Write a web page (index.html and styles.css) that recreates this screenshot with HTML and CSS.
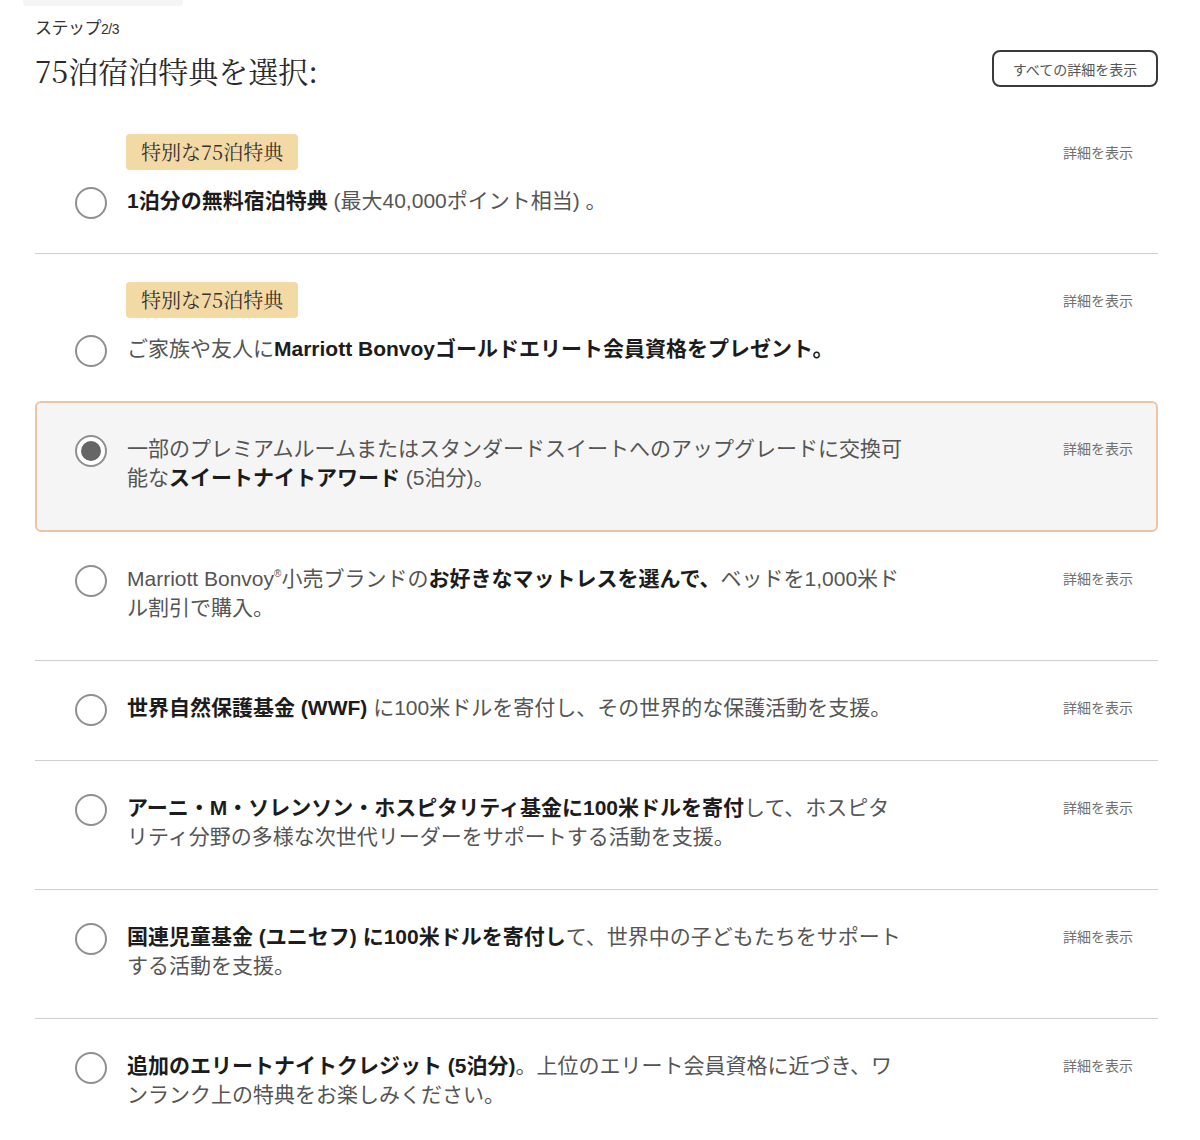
FILE: index.html
```html
<!DOCTYPE html>
<html lang="ja">
<head>
<meta charset="utf-8">
<title>75泊宿泊特典を選択</title>
<link rel="stylesheet" href="styles.css">
</head>
<body>
<div class="page">
  <div class="tab-shadow"></div>
  <header class="header">
    <p class="step">ステップ<span class="step-num">2/3</span></p>
    <div class="title-row">
      <h1 class="title">75泊宿泊特典を選択:</h1>
      <button class="all-details" type="button">すべての詳細を表示</button>
    </div>
  </header>

  <div class="options">
    <div class="option option--featured">
      <div class="option-body">
        <span class="badge">特別な75泊特典</span>
        <div class="choice">
          <span class="radio"></span>
          <p class="choice-text"><b>1泊分の無料宿泊特典</b> (最大40,000ポイント相当) 。</p>
        </div>
      </div>
      <a class="detail">詳細を表示</a>
    </div>

    <div class="option option--featured">
      <div class="option-body">
        <span class="badge">特別な75泊特典</span>
        <div class="choice">
          <span class="radio"></span>
          <p class="choice-text">ご家族や友人に<b>Marriott Bonvoyゴールドエリート会員資格をプレゼント。</b></p>
        </div>
      </div>
      <a class="detail">詳細を表示</a>
    </div>

    <div class="option option--selected">
      <div class="option-body">
        <div class="choice">
          <span class="radio radio--checked"></span>
          <p class="choice-text">一部のプレミアムルームまたはスタンダードスイートへのアップグレードに交換可<br>能な<b>スイートナイトアワード</b> (5泊分)。</p>
        </div>
      </div>
      <a class="detail">詳細を表示</a>
    </div>

    <div class="option">
      <div class="option-body">
        <div class="choice">
          <span class="radio"></span>
          <p class="choice-text">Marriott Bonvoy<sup>®</sup>小売ブランドの<b>お好きなマットレスを選んで、</b>ベッドを1,000米ド<br>ル割引で購入。</p>
        </div>
      </div>
      <a class="detail">詳細を表示</a>
    </div>

    <div class="option">
      <div class="option-body">
        <div class="choice">
          <span class="radio"></span>
          <p class="choice-text"><b>世界自然保護基金 (WWF)</b> に100米ドルを寄付し、その世界的な保護活動を支援。</p>
        </div>
      </div>
      <a class="detail">詳細を表示</a>
    </div>

    <div class="option">
      <div class="option-body">
        <div class="choice">
          <span class="radio"></span>
          <p class="choice-text"><b>アーニ・M・ソレンソン・ホスピタリティ基金に100米ドルを寄付</b>して、ホスピタ<br>リティ分野の多様な次世代リーダーをサポートする活動を支援。</p>
        </div>
      </div>
      <a class="detail">詳細を表示</a>
    </div>

    <div class="option">
      <div class="option-body">
        <div class="choice">
          <span class="radio"></span>
          <p class="choice-text"><b>国連児童基金 (ユニセフ) に100米ドルを寄付し</b>て、世界中の子どもたちをサポート<br>する活動を支援。</p>
        </div>
      </div>
      <a class="detail">詳細を表示</a>
    </div>

    <div class="option">
      <div class="option-body">
        <div class="choice">
          <span class="radio"></span>
          <p class="choice-text"><b>追加のエリートナイトクレジット (5泊分)</b>。上位のエリート会員資格に近づき、ワ<br>ンランク上の特典をお楽しみください。</p>
        </div>
      </div>
      <a class="detail">詳細を表示</a>
    </div>
  </div>
</div>
</body>
</html>
```

FILE: styles.css
```css
* {
  box-sizing: border-box;
}

html, body {
  margin: 0;
  padding: 0;
  background: #ffffff;
}

body {
  font-family: "Liberation Sans", "Noto Sans CJK JP", sans-serif;
  color: #333333;
}

.page {
  padding: 0 42px 40px 35px;
}

.tab-shadow {
  width: 160px;
  height: 6px;
  margin-left: -12px;
  background: #f5f5f5;
  border-radius: 0 0 4px 4px;
}

.header {
  padding-top: 13px;
}

.step {
  margin: 0;
  font-size: 17px;
  line-height: 20px;
  color: #333333;
  letter-spacing: -0.5px;
}

.step-num {
  font-size: 14px;
  letter-spacing: -0.5px;
}

.title-row {
  display: flex;
  justify-content: space-between;
  align-items: flex-start;
  margin-top: 11px;
}

.title {
  margin: 0;
  font-family: "Noto Serif CJK JP", "Liberation Serif", "Noto Sans CJK JP", serif;
  font-weight: 400;
  font-size: 30px;
  line-height: 40px;
  color: #2a2a2a;
}

.all-details {
  height: 37px;
  width: 166px;
  padding: 0;
  border: 2px solid #3a3a3a;
  border-radius: 8px;
  background: #ffffff;
  font-family: "Noto Sans CJK JP", sans-serif;
  font-size: 14px;
  color: #555555;
}

.options {
  margin-top: 16px;
}

.option {
  display: flex;
  align-items: flex-start;
  padding: 32px 25px 38px 40px;
  border-top: 1px solid #cfcfcf;
}

.option:first-child,
.option--selected + .option {
  border-top: none;
}

.option--featured {
  padding-top: 28px;
}

.option--selected {
  padding: 31px 23px 38px 38px;
  border: 2px solid #efc4a2;
  border-radius: 6px;
  background: #f5f5f5;
}

.option-body {
  flex: 1;
  display: flex;
  flex-direction: column;
  align-items: flex-start;
}

.badge {
  margin-left: 51px;
  margin-bottom: 16px;
  padding: 0 15px;
  height: 36px;
  line-height: 36px;
  border-radius: 4px;
  background: #f3d9a4;
  font-family: "Noto Serif CJK JP", "Liberation Serif", "Noto Sans CJK JP", serif;
  font-size: 20px;
  color: #333333;
}

.choice {
  display: flex;
  align-items: flex-start;
  gap: 20px;
}

.radio {
  flex: none;
  width: 32px;
  height: 32px;
  margin-top: 1px;
  margin-bottom: -4px;
  border: 2px solid #8f8f8f;
  border-radius: 50%;
  background: #ffffff;
  display: flex;
  align-items: center;
  justify-content: center;
}

.radio--checked::after {
  content: "";
  width: 20px;
  height: 20px;
  border-radius: 50%;
  background: #666666;
}

.choice-text {
  margin: 0;
  font-size: 21px;
  line-height: 29px;
  color: #555555;
  white-space: nowrap;
}

.choice-text b {
  font-weight: 700;
  color: #1c1c1c;
}

.choice-text sup {
  font-size: 10px;
  line-height: 0;
  vertical-align: 9px;
}

.detail {
  flex: none;
  font-family: "Noto Sans CJK JP", sans-serif;
  font-size: 14px;
  line-height: 29px;
  color: #707070;
  cursor: pointer;
}

.option--featured .detail {
  line-height: 36px;
}
```
